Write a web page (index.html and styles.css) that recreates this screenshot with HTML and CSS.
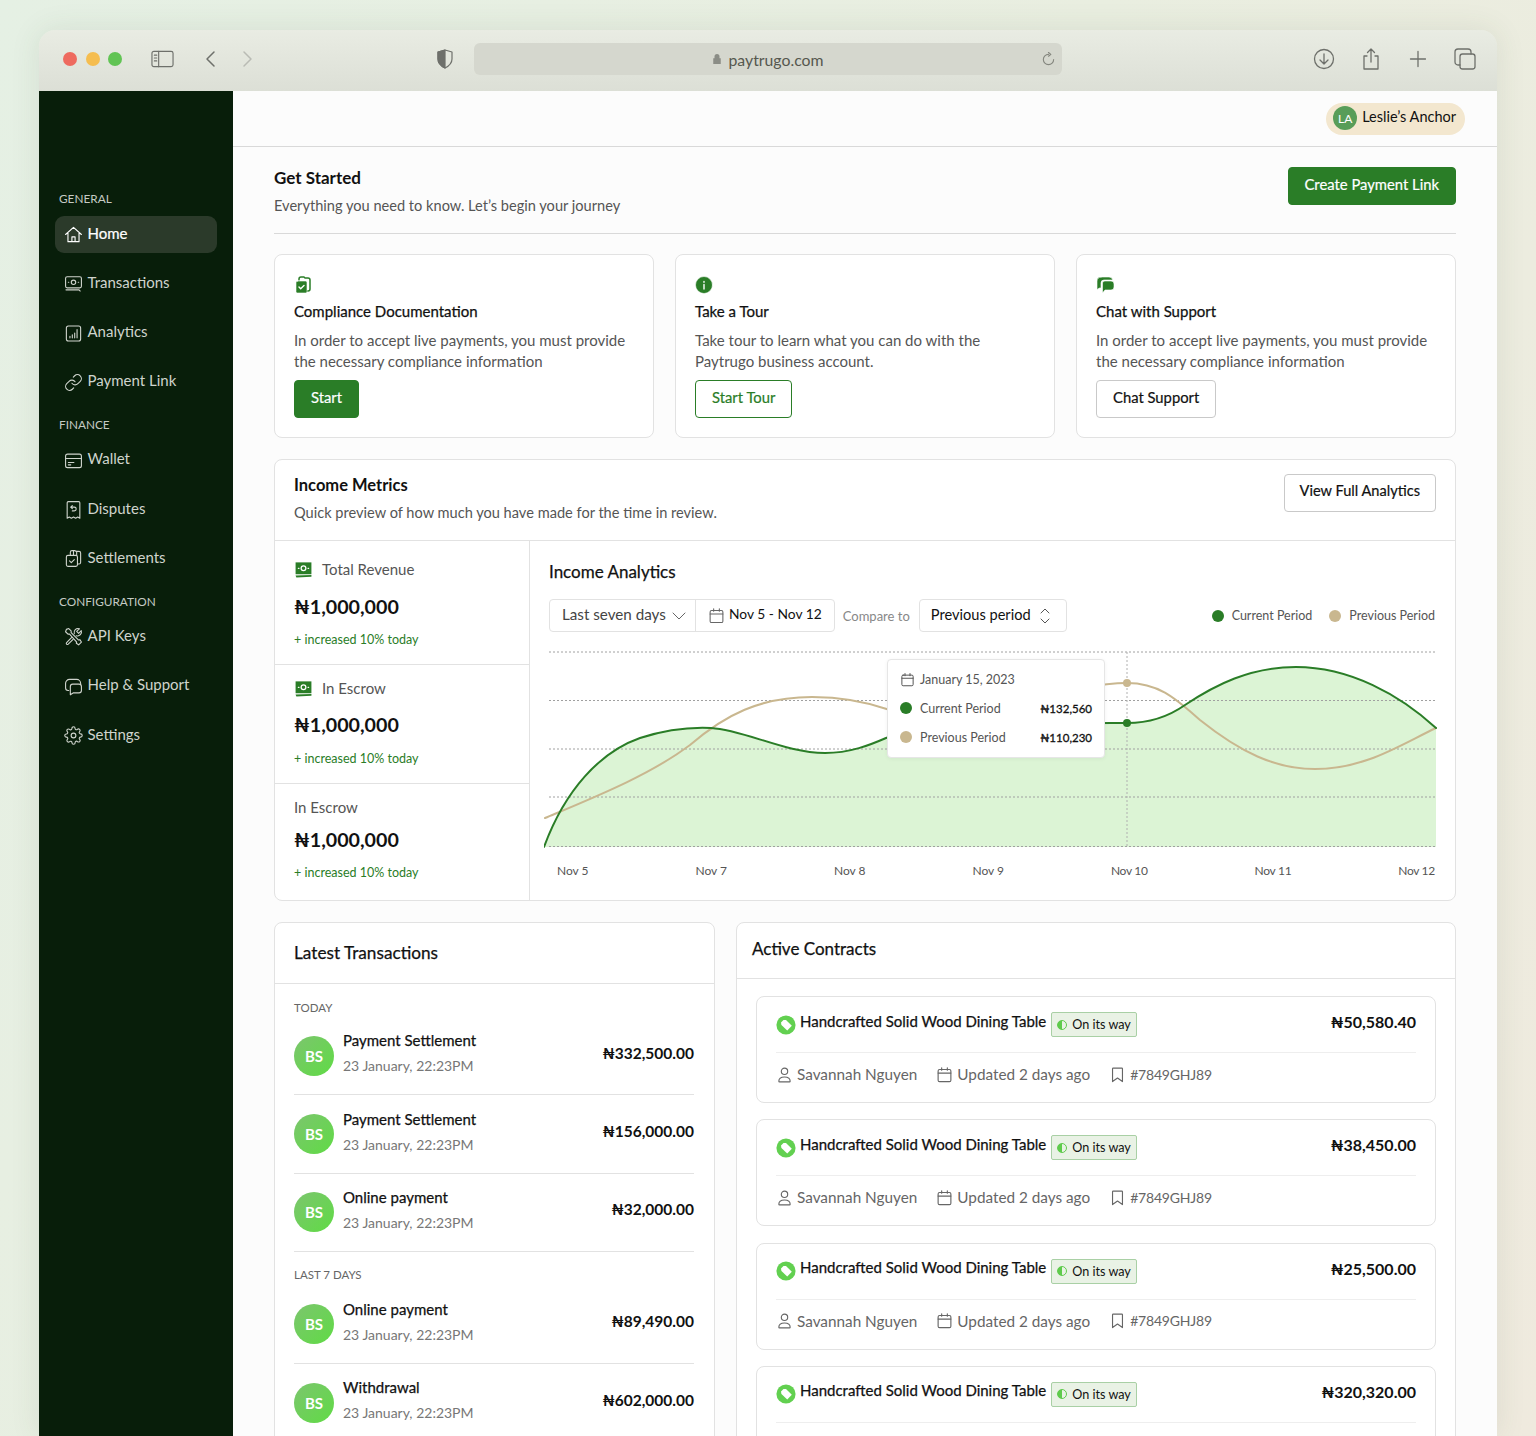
FILE: index.html
```html
<!DOCTYPE html>
<html lang="en">
<head>
    <meta charset="UTF-8">
    <meta name="viewport" content="width=device-width, initial-scale=1.0">
    <title>Paytrugo</title>
    <link rel="stylesheet" href="styles.css">
</head>
<body>
    <svg class="sprite" width="0" height="0">
        <symbol id="i-home" viewBox="0 0 24 24"><path d="M2 12 12 3l10 9M5 10v11h14V10M10 21v-6h4v6"/></symbol>
        <symbol id="i-cash" viewBox="0 0 24 24"><rect x="2" y="3.500" width="20" height="14" rx="2"/><circle cx="12" cy="10.500" r="2.800"/><path d="M5.500 10.500h.5M18 10.500h.5M2.500 20h16.500l1.500 1.500"/></symbol>
        <symbol id="i-chart" viewBox="0 0 24 24"><rect x="3" y="2.500" width="18" height="19" rx="2.500"/><path d="M7.500 17.500v-2M10.500 17.500v-4M13.500 17.500v-6M16.500 17.500V7"/></symbol>
        <symbol id="i-link" viewBox="0 0 24 24"><path d="M10 13a5 5 0 0 0 7.540.54l3-3a5 5 0 0 0-7.070-7.070l-1.720 1.710"/><path d="M14 11a5 5 0 0 0-7.540-.54l-3 3a5 5 0 0 0 7.070 7.070l1.710-1.710"/></symbol>
        <symbol id="i-wallet" viewBox="0 0 24 24"><rect x="2" y="4" width="20" height="17" rx="2.500"/><path d="M2 9.500h20M5.500 14.500h7M5.500 17.500h3"/></symbol>
        <symbol id="i-receipt" viewBox="0 0 24 24"><path d="M4 23V3.500A1.500 1.500 0 0 1 5.500 2h13A1.500 1.500 0 0 1 20 3.500V23l-2.700-1.500L14.700 23 12 21.500 9.300 23l-2.600-1.500z"/><path d="M10.500 7 8.500 9l2 2M8.500 9H13a2.300 2.300 0 0 1 0 4.800h-2.500"/></symbol>
        <symbol id="i-settle" viewBox="0 0 24 24"><path d="M8 7V4a2 2 0 0 1 2-2h4l1 1h4a2 2 0 0 1 2 2v12a2 2 0 0 1-2 2h-2"/><path d="M12 2.500V7M16 3v4"/><rect x="3" y="8" width="14" height="14" rx="2"/><path d="m7 15 2.200 2.200L13 13.500"/></symbol>
        <symbol id="i-tools" viewBox="0 0 24 24"><path d="M3 3l3-1 3 3v2l9.500 9.500 1.500-.5 2 3-3.500 3.500-3-2 .5-1.500L7 9H5L2 6z"/><path d="M13 8.500a5 5 0 0 1 6.500-6.300L16 5.500l2.500 2.500 3.300-3.400A5 5 0 0 1 15.500 11M9.500 13.500 3.300 19.700a1.500 1.500 0 0 0 0 2 1.500 1.500 0 0 0 2 0l6.200-6.200"/></symbol>
        <symbol id="i-chat" viewBox="0 0 24 24"><path d="M6 17H5a3 3 0 0 1-3-3V8a5 5 0 0 1 5-5h9a5 5 0 0 1 5 5v1"/><path d="M8 12a3 3 0 0 1 3-3h8a3 3 0 0 1 3 3v5a3 3 0 0 1-3 3h-7l-4 2.500V12z"/></symbol>
        <symbol id="i-gear" viewBox="0 0 24 24"><circle cx="12" cy="12" r="3"/><path d="M19.400 15a1.650 1.650 0 0 0 .33 1.820l.06.06a2 2 0 0 1 0 2.830 2 2 0 0 1-2.830 0l-.06-.06a1.650 1.650 0 0 0-1.820-.33 1.650 1.650 0 0 0-1 1.510V21a2 2 0 0 1-2 2 2 2 0 0 1-2-2v-.09A1.650 1.650 0 0 0 9 19.400a1.650 1.650 0 0 0-1.820.33l-.06.06a2 2 0 0 1-2.830 0 2 2 0 0 1 0-2.830l.06-.06a1.650 1.650 0 0 0 .33-1.820 1.650 1.650 0 0 0-1.510-1H3a2 2 0 0 1-2-2 2 2 0 0 1 2-2h.09A1.650 1.650 0 0 0 4.600 9a1.650 1.650 0 0 0-.33-1.820l-.06-.06a2 2 0 0 1 0-2.830 2 2 0 0 1 2.830 0l.06.06a1.650 1.650 0 0 0 1.820.33H9a1.650 1.650 0 0 0 1-1.510V3a2 2 0 0 1 2-2 2 2 0 0 1 2 2v.09a1.650 1.650 0 0 0 1 1.510 1.650 1.650 0 0 0 1.820-.33l.06-.06a2 2 0 0 1 2.830 0 2 2 0 0 1 0 2.830l-.06.06a1.650 1.650 0 0 0-.33 1.820V9a1.650 1.650 0 0 0 1.510 1H21a2 2 0 0 1 2 2 2 2 0 0 1-2 2h-.09a1.650 1.650 0 0 0-1.510 1z"/></symbol>
        <symbol id="i-cal" viewBox="0 0 24 24"><rect x="3" y="5" width="18" height="17" rx="2"/><path d="M3 10h18M8 2.500V6M16 2.500V6"/></symbol>
        <symbol id="i-user" viewBox="0 0 24 24"><circle cx="12" cy="7.500" r="4.500"/><path d="M4 21.500c0-4 3-6 8-6s8 2 8 6c0 .5-.5 1-1 1H5c-.5 0-1-.5-1-1z"/></symbol>
        <symbol id="i-mark" viewBox="0 0 24 24"><path d="M6 3h12a1 1 0 0 1 1 1v18l-7-5-7 5V4a1 1 0 0 1 1-1z"/></symbol>
        <symbol id="i-money" viewBox="0 0 24 24"><path d="M2 3h20v15H2z" fill="#2a7d27" stroke="none"/><path d="M2 19.500 22 19v2L3 22z" fill="#2a7d27" stroke="none"/><circle cx="12" cy="10.500" r="3" stroke="#fff" stroke-width="1.600"/><path d="M5.500 10.500h.8M17.700 10.500h.8" stroke="#fff" stroke-width="1.600"/></symbol>
        <symbol id="i-tag" viewBox="0 0 24 24"><circle cx="12" cy="12" r="11.500" fill="#62d050" stroke="none"/><path d="m6 9 3-3h3l7 7-5.500 5.500L6.500 12z" fill="#fff" stroke="none"/></symbol>
    </svg>

    <div class="window">
        <div class="toolbar">
            <div class="lights">
                <span class="light light-red"></span>
                <span class="light light-yellow"></span>
                <span class="light light-green"></span>
            </div>
            <svg class="tb-side" viewBox="0 0 24 18"><rect x="1" y="1" width="22" height="16" rx="2"/><path d="M8 1v16M3.500 5h2.500M3.500 8h2.500M3.500 11h2.500"/></svg>
            <svg class="tb-chev" viewBox="0 0 12 18"><path d="M10 2 3 9l7 7"/></svg>
            <svg class="tb-chev tb-chev-off" viewBox="0 0 12 18"><path d="m2 2 7 7-7 7"/></svg>
            <svg class="tb-shield" viewBox="0 0 18 20"><path d="M9 1 2 3v7c0 4 3 7 7 9 4-2 7-5 7-9V3z"/><path d="M9 1 2 3v7c0 4 3 7 7 9z" class="tb-shield-half"/></svg>
            <div class="urlbar">
                <span class="url-text">
                    <svg class="url-lock" viewBox="0 0 12 14"><path d="M3 6V4a3 3 0 0 1 6 0v2h1.500v7h-9V6z"/></svg>
                    paytrugo.com
                </span>
                <svg class="url-reload" viewBox="0 0 16 16"><path d="M8 2.500a5.500 5.500 0 1 0 5.500 5.500M8 .5l2.500 2L8 4.500"/></svg>
            </div>
            <div class="tb-right">
                <svg class="tb-icon" viewBox="0 0 22 22"><circle cx="11" cy="11" r="9.500"/><path d="M11 6v10M7 12l4 4 4-4"/></svg>
                <svg class="tb-icon" viewBox="0 0 22 22"><path d="M7 8H4v13h14V8h-3M11 14V1M7.500 4.500 11 1l3.500 3.500"/></svg>
                <svg class="tb-icon" viewBox="0 0 22 22"><path d="M11 3.500v15M3.500 11h15"/></svg>
                <svg class="tb-icon" viewBox="0 0 22 22"><rect x="6" y="6" width="15" height="15" rx="2.500"/><path d="M6 17H4a3 3 0 0 1-3-3V4a3 3 0 0 1 3-3h10a3 3 0 0 1 3 3v2"/></svg>
            </div>
        </div>

        <div class="app">
            <aside class="sidebar">
                <div class="nav-label">GENERAL</div>
                <nav class="nav-group">
                    <a class="nav-item active"><svg class="nav-icon"><use href="#i-home"/></svg><span>Home</span></a>
                    <a class="nav-item"><svg class="nav-icon"><use href="#i-cash"/></svg><span>Transactions</span></a>
                    <a class="nav-item"><svg class="nav-icon"><use href="#i-chart"/></svg><span>Analytics</span></a>
                    <a class="nav-item"><svg class="nav-icon"><use href="#i-link"/></svg><span>Payment Link</span></a>
                </nav>
                <div class="nav-label">FINANCE</div>
                <nav class="nav-group">
                    <a class="nav-item"><svg class="nav-icon"><use href="#i-wallet"/></svg><span>Wallet</span></a>
                    <a class="nav-item"><svg class="nav-icon"><use href="#i-receipt"/></svg><span>Disputes</span></a>
                    <a class="nav-item"><svg class="nav-icon"><use href="#i-settle"/></svg><span>Settlements</span></a>
                </nav>
                <div class="nav-label">CONFIGURATION</div>
                <nav class="nav-group">
                    <a class="nav-item"><svg class="nav-icon"><use href="#i-tools"/></svg><span>API Keys</span></a>
                    <a class="nav-item"><svg class="nav-icon"><use href="#i-chat"/></svg><span>Help &amp; Support</span></a>
                    <a class="nav-item"><svg class="nav-icon"><use href="#i-gear"/></svg><span>Settings</span></a>
                </nav>
            </aside>

            <main class="main">
                <header class="topbar">
                    <div class="account"><span class="account-avatar">LA</span><span class="account-name">Leslie’s Anchor</span></div>
                </header>

                <div class="content">
                    <section class="intro">
                        <div>
                            <h1>Get Started</h1>
                            <p>Everything you need to know. Let’s begin your journey</p>
                        </div>
                        <button class="btn btn-green btn-create">Create Payment Link</button>
                    </section>

                    <section class="start-cards">
                        <div class="card start-card">
                            <svg class="start-icon" viewBox="0 0 18 18"><path d="M5 4V3a2 2 0 0 1 2-2h3l1 1h3a2 2 0 0 1 2 2v9a2 2 0 0 1-2 2h-1" class="solid-line"/><rect x="2" y="5" width="11" height="12" rx="1.500" class="solid"/><path d="m5 11 1.700 1.700L10 9.500" class="check"/></svg>
                            <h3>Compliance Documentation</h3>
                            <p>In order to accept live payments, you must provide the necessary compliance information</p>
                            <button class="btn btn-green">Start</button>
                        </div>
                        <div class="card start-card">
                            <svg class="start-icon" viewBox="0 0 18 18"><circle cx="9" cy="9" r="8.500" class="solid"/><path d="M9 8.500V13M9 5.500v.8" class="check"/></svg>
                            <h3>Take a Tour</h3>
                            <p>Take tour to learn what you can do with the Paytrugo business account.</p>
                            <button class="btn btn-outline-green">Start Tour</button>
                        </div>
                        <div class="card start-card">
                            <svg class="start-icon" viewBox="0 0 18 18"><path d="M5 1h8a4 4 0 0 1 3.800 3H8a3 3 0 0 0-3 3v5H3.500L1 13.500V5a4 4 0 0 1 4-4z" class="solid"/><path d="M8 5h7a3 3 0 0 1 3 3v3a3 3 0 0 1-3 3H9l-2.500 3V7A2 2 0 0 1 8 5z" class="solid"/></svg>
                            <h3>Chat with Support</h3>
                            <p>In order to accept live payments, you must provide the necessary compliance information</p>
                            <button class="btn btn-outline">Chat Support</button>
                        </div>
                    </section>

                    <section class="card metrics">
                        <div class="metrics-head">
                            <div>
                                <h2>Income Metrics</h2>
                                <p>Quick preview of how much you have made for the time in review.</p>
                            </div>
                            <button class="btn btn-outline">View Full Analytics</button>
                        </div>
                        <div class="metrics-body">
                            <div class="stats">
                                <div class="stat stat-first">
                                    <div class="stat-label"><svg class="stat-icon"><use href="#i-money"/></svg>Total Revenue</div>
                                    <div class="stat-value">₦1,000,000</div>
                                    <div class="stat-note">+ increased 10% today</div>
                                </div>
                                <div class="stat">
                                    <div class="stat-label"><svg class="stat-icon"><use href="#i-money"/></svg>In Escrow</div>
                                    <div class="stat-value">₦1,000,000</div>
                                    <div class="stat-note">+ increased 10% today</div>
                                </div>
                                <div class="stat stat-last">
                                    <div class="stat-label">In Escrow</div>
                                    <div class="stat-value">₦1,000,000</div>
                                    <div class="stat-note">+ increased 10% today</div>
                                </div>
                            </div>
                            <div class="analytics">
                                <h2>Income Analytics</h2>
                                <div class="filters">
                                    <div class="range">
                                        <div class="range-part range-days"><span>Last seven days</span>
                                            <svg class="chev" viewBox="0 0 14 8"><path d="m1 1 6 6 6-6"/></svg>
                                        </div>
                                        <div class="range-part range-dates"><svg class="cal-icon"><use href="#i-cal"/></svg><span>Nov 5 - Nov 12</span></div>
                                    </div>
                                    <span class="compare">Compare to</span>
                                    <div class="period"><span>Previous period</span>
                                        <svg class="updown" viewBox="0 0 10 16"><path d="m1 5 4-4 4 4M1 11l4 4 4-4"/></svg>
                                    </div>
                                    <div class="legend">
                                        <span class="legend-item"><i class="dot dot-green"></i>Current Period</span>
                                        <span class="legend-item"><i class="dot dot-tan"></i>Previous Period</span>
                                    </div>
                                </div>
                                <div class="chart">
                                    <svg class="chart-svg" viewBox="544 650 894 200" width="894" height="200">
                                        <path class="chart-area" d="M544 847C565 790 600 752 640 738C665 730 690 727 711 728C745 730 785 753 825 753C850 753 870 745 886 738C930 722 1080 723 1127 723C1150 723 1168 717 1185 705C1215 685 1250 667 1296 667C1350 667 1400 695 1436 728V847z"/>
                                        <path class="grid" d="M549 652H1437M549 700.500H1437M549 749H1437M549 797H1437M549 846.500H1437"/>
                                        <path class="cursor" d="M1127 652V846"/>
                                        <path class="line-tan" d="M545 818C595 797 650 775 690 745C725 715 760 697 812 697C845 697 870 703 890 710C950 730 1060 683 1127 683C1160 683 1177 700 1200 720C1240 752 1275 769 1315 769C1365 769 1400 745 1436 728"/>
                                        <path class="line-green" d="M544 847C565 790 600 752 640 738C665 730 690 727 711 728C745 730 785 753 825 753C850 753 870 745 886 738C930 722 1080 723 1127 723C1150 723 1168 717 1185 705C1215 685 1250 667 1296 667C1350 667 1400 695 1436 728"/>
                                        <circle class="pin-tan" cx="1127" cy="683" r="4"/>
                                        <circle class="pin-green" cx="1127" cy="723" r="4"/>
                                    </svg>
                                    <div class="tip">
                                        <div class="tip-date"><svg class="tip-cal"><use href="#i-cal"/></svg>January 15, 2023</div>
                                        <div class="tip-row"><i class="dot dot-green"></i><span class="tip-name">Current Period</span><b>₦132,560</b></div>
                                        <div class="tip-row"><i class="dot dot-tan"></i><span class="tip-name">Previous Period</span><b>₦110,230</b></div>
                                    </div>
                                </div>
                                <div class="x-axis">
                                    <span>Nov 5</span><span>Nov 7</span><span>Nov 8</span><span>Nov 9</span><span>Nov 10</span><span>Nov 11</span><span>Nov 12</span>
                                </div>
                            </div>
                        </div>
                    </section>

                    <section class="bottom">
                        <div class="card latest">
                            <h2 class="latest-title">Latest Transactions</h2>
                            <div class="latest-body">
                                <div class="group-label">TODAY</div>
                                <div class="tx">
                                    <span class="tx-avatar">BS</span>
                                    <div class="tx-text"><strong>Payment Settlement</strong><span>23 January, 22:23PM</span></div>
                                    <div class="tx-amount">₦332,500.00</div>
                                </div>
                                <div class="tx">
                                    <span class="tx-avatar">BS</span>
                                    <div class="tx-text"><strong>Payment Settlement</strong><span>23 January, 22:23PM</span></div>
                                    <div class="tx-amount">₦156,000.00</div>
                                </div>
                                <div class="tx">
                                    <span class="tx-avatar">BS</span>
                                    <div class="tx-text"><strong>Online payment</strong><span>23 January, 22:23PM</span></div>
                                    <div class="tx-amount">₦32,000.00</div>
                                </div>
                                <div class="group-label group-label-next">LAST 7 DAYS</div>
                                <div class="tx">
                                    <span class="tx-avatar">BS</span>
                                    <div class="tx-text"><strong>Online payment</strong><span>23 January, 22:23PM</span></div>
                                    <div class="tx-amount">₦89,490.00</div>
                                </div>
                                <div class="tx">
                                    <span class="tx-avatar">BS</span>
                                    <div class="tx-text"><strong>Withdrawal</strong><span>23 January, 22:23PM</span></div>
                                    <div class="tx-amount">₦602,000.00</div>
                                </div>
                            </div>
                        </div>

                        <div class="card contracts">
                            <h2 class="contracts-title">Active Contracts</h2>
                            <div class="contracts-body">
                                <div class="contract">
                                    <div class="contract-top">
                                        <svg class="tag-icon"><use href="#i-tag"/></svg>
                                        <strong>Handcrafted Solid Wood Dining Table</strong>
                                        <span class="badge"><i class="badge-dot"></i>On its way</span>
                                        <b class="contract-amount">₦50,580.40</b>
                                    </div>
                                    <div class="contract-meta">
                                        <span><svg class="meta-icon"><use href="#i-user"/></svg>Savannah Nguyen</span>
                                        <span><svg class="meta-icon"><use href="#i-cal"/></svg>Updated 2 days ago</span>
                                        <span class="meta-ref"><svg class="meta-icon"><use href="#i-mark"/></svg>#7849GHJ89</span>
                                    </div>
                                </div>
                                <div class="contract">
                                    <div class="contract-top">
                                        <svg class="tag-icon"><use href="#i-tag"/></svg>
                                        <strong>Handcrafted Solid Wood Dining Table</strong>
                                        <span class="badge"><i class="badge-dot"></i>On its way</span>
                                        <b class="contract-amount">₦38,450.00</b>
                                    </div>
                                    <div class="contract-meta">
                                        <span><svg class="meta-icon"><use href="#i-user"/></svg>Savannah Nguyen</span>
                                        <span><svg class="meta-icon"><use href="#i-cal"/></svg>Updated 2 days ago</span>
                                        <span class="meta-ref"><svg class="meta-icon"><use href="#i-mark"/></svg>#7849GHJ89</span>
                                    </div>
                                </div>
                                <div class="contract">
                                    <div class="contract-top">
                                        <svg class="tag-icon"><use href="#i-tag"/></svg>
                                        <strong>Handcrafted Solid Wood Dining Table</strong>
                                        <span class="badge"><i class="badge-dot"></i>On its way</span>
                                        <b class="contract-amount">₦25,500.00</b>
                                    </div>
                                    <div class="contract-meta">
                                        <span><svg class="meta-icon"><use href="#i-user"/></svg>Savannah Nguyen</span>
                                        <span><svg class="meta-icon"><use href="#i-cal"/></svg>Updated 2 days ago</span>
                                        <span class="meta-ref"><svg class="meta-icon"><use href="#i-mark"/></svg>#7849GHJ89</span>
                                    </div>
                                </div>
                                <div class="contract">
                                    <div class="contract-top">
                                        <svg class="tag-icon"><use href="#i-tag"/></svg>
                                        <strong>Handcrafted Solid Wood Dining Table</strong>
                                        <span class="badge"><i class="badge-dot"></i>On its way</span>
                                        <b class="contract-amount">₦320,320.00</b>
                                    </div>
                                </div>
                            </div>
                        </div>
                    </section>
                </div>
            </main>
        </div>
    </div>
</body>
</html>
```

FILE: styles.css
```css
/* Page + browser frame */
* {
    box-sizing: border-box;
}

html, body {
    height: 1436px;
    overflow: hidden;
}

body {
    margin: 0;
    padding: 30px 39px 0;
    font-family: Lato, "Noto Sans", sans-serif;
    font-size: 15px;
    color: #111;
    background: linear-gradient(115deg, #e5f0e4 0%, #e9eee0 50%, #efeade 100%);
}

.sprite {
    position: absolute;
}

h1, h2, h3, p {
    margin: 0;
}

svg {
    fill: none;
    stroke: currentColor;
    stroke-linecap: round;
    stroke-linejoin: round;
}

.window {
    width: 1458px;
    height: 1406px;
    border-radius: 16px 16px 0 0;
    overflow: hidden;
    box-shadow: 0 0 30px rgba(60, 80, 50, 0.1);
}

.toolbar {
    display: flex;
    align-items: center;
    height: 61px;
    padding: 0 21px 3px 24px;
    color: #6e706b;
    background: linear-gradient(180deg, #e9ece3, #dcdfd6);
}

.lights {
    display: flex;
    gap: 8.5px;
}

.light {
    width: 14px;
    height: 14px;
    border-radius: 50%;
}

.light-red { background-color: #ee6a5f; }
.light-yellow { background-color: #f5bd4f; }
.light-green { background-color: #61c454; }

.tb-side {
    width: 23px;
    height: 18px;
    margin-left: 29px;
    stroke-width: 1.2;
}

.tb-chev {
    width: 12px;
    height: 18px;
    margin-left: 30px;
    stroke-width: 1.5;
}

.tb-chev-off {
    margin-left: 26px;
    color: #b9bbb4;
}

.tb-shield {
    width: 18px;
    height: 20px;
    margin-left: 182px;
    stroke-width: 1.2;
}

.tb-shield-half {
    fill: currentColor;
}

.urlbar {
    position: relative;
    display: flex;
    align-items: center;
    justify-content: center;
    width: 588px;
    height: 32px;
    margin-left: 20px;
    border-radius: 6px;
    font-size: 15.800px;
    color: #55574f;
    background-color: #d5d7ce;
}

.url-text {
    display: flex;
    align-items: center;
    gap: 6px;
}

.url-lock {
    width: 10px;
    height: 12px;
    fill: #8b8d86;
    stroke: none;
}

.url-reload {
    position: absolute;
    right: 6px;
    top: 9px;
    width: 15px;
    height: 15px;
    color: #85877f;
    stroke-width: 1.2;
}

.tb-right {
    display: flex;
    gap: 25px;
    margin-left: auto;
}

.tb-icon {
    width: 22px;
    height: 22px;
    stroke-width: 1.3;
}

.app {
    display: flex;
    height: 1345px;
}

/* Sidebar */
.sidebar {
    flex: 0 0 194px;
    padding: 101px 16px 0;
    color: #cfd4cd;
    background-color: #081e0a;
}

.nav-label {
    height: 14px;
    margin: 0 0 9.500px 4px;
    font-size: 11.800px;
    line-height: 14px;
    color: #c5cbc4;
}

.nav-group {
    display: flex;
    flex-direction: column;
    gap: 12.3px;
    margin-bottom: 17.500px;
}

.nav-group:first-of-type {
    margin-top: 10px;
}

.nav-item {
    display: flex;
    align-items: center;
    gap: 4.5px;
    width: 162px;
    height: 37px;
    padding-left: 9px;
    border-radius: 9px;
    font-size: 15px;
}

.nav-item span {
    margin-bottom: 4px;
}

.nav-item.active {
    color: #fff;
    background-color: #2b3a2a;
    -webkit-text-stroke: 0.2px currentColor;
}

.nav-icon {
    width: 19px;
    height: 19px;
    stroke-width: 1.4;
}

/* Main column */
.main {
    flex: 1;
    min-width: 0;
    background-color: #fcfcfc;
}

.topbar {
    display: flex;
    align-items: center;
    justify-content: flex-end;
    height: 56px;
    padding-right: 32px;
    border-bottom: 1px solid #d9d9d9;
}

.account {
    display: flex;
    align-items: center;
    gap: 5px;
    height: 32px;
    padding: 0 9px 0 7px;
    border-radius: 16px;
    font-size: 14.500px;
    background-color: #f3e7cf;
}

.account-name {
    margin-bottom: 4px;
}

.account-avatar {
    display: flex;
    align-items: center;
    justify-content: center;
    width: 24px;
    height: 24px;
    margin-bottom: 1px;
    border-radius: 50%;
    font-size: 12px;
    color: #fff;
    background-color: #589d58;
}

.content {
    padding: 20px 41px 0;
}

.intro {
    display: flex;
    justify-content: space-between;
    height: 67px;
    border-bottom: 1px solid #d9d9d9;
}

.intro h1 {
    margin-top: 1px;
    font-size: 17px;
    font-weight: 700;
    line-height: 20px;
}

.intro p {
    margin-top: 8px;
    font-size: 14.600px;
    line-height: 20px;
    color: #555;
}

.btn {
    height: 38px;
    padding: 0 16px 5px;
    border-radius: 4px;
    font-family: inherit;
    font-size: 14.800px;
    background-color: #fff;
    cursor: pointer;
    -webkit-text-stroke: 0.2px currentColor;
}

.btn-green {
    border: 1px solid #2a7d27;
    color: #fff;
    background-color: #2a7d27;
}

.btn-outline-green {
    border: 1px solid #2a7d27;
    color: #2a7d27;
}

.btn-outline {
    border: 1px solid #c9c9c9;
    color: #111;
}

.card {
    border: 1px solid #e2e2e2;
    border-radius: 8px;
    background-color: #fff;
}

.start-cards {
    display: grid;
    grid-template-columns: repeat(3, 1fr);
    gap: 21px;
    margin-top: 20px;
}

.start-card {
    height: 184px;
    padding: 21px 19px 0;
}

.start-icon {
    display: block;
    width: 18px;
    height: 18px;
}

.solid {
    fill: #2a7d27;
    stroke: #fff;
    stroke-width: 0.6;
}

.solid-line {
    stroke: #2a7d27;
    stroke-width: 1.5;
}

.check {
    stroke: #fff;
    stroke-width: 1.4;
}

.start-card h3 {
    margin-top: 7px;
    font-size: 15px;
    font-weight: 400;
    line-height: 20px;
    -webkit-text-stroke: 0.25px currentColor;
}

.start-card p {
    margin-top: 9px;
    font-size: 15px;
    line-height: 21px;
    color: #555;
}

.start-card .btn {
    margin-top: 8px;
}

/* Income metrics */
.metrics {
    margin-top: 21px;
}

.metrics-head {
    display: flex;
    align-items: flex-start;
    justify-content: space-between;
    height: 81px;
    padding: 14px 19px 0;
    border-bottom: 1px solid #e2e2e2;
}

.metrics-head h2 {
    margin-top: 1px;
    font-size: 16.500px;
    font-weight: 700;
    line-height: 20px;
}

.metrics-head p {
    margin-top: 8px;
    font-size: 14.600px;
    line-height: 20px;
    color: #555;
}

.metrics-head .btn {
    padding: 0 15px 5px;
    font-size: 14.600px;
}

.metrics-body {
    display: flex;
}

.stats {
    flex: 0 0 255px;
    border-right: 1px solid #e2e2e2;
}

.stat {
    height: 119px;
    padding: 13px 19px 0;
    border-bottom: 1px solid #e2e2e2;
}

.stat-first {
    height: 124px;
    padding-top: 18px;
}

.stat-last {
    height: 116px;
    border-bottom: none;
}

.stat-label {
    display: flex;
    align-items: center;
    gap: 9px;
    height: 20px;
    font-size: 15px;
    color: #555;
}

.stat-icon {
    width: 19px;
    height: 19px;
}

.stat-value {
    margin-top: 14px;
    font-size: 19.700px;
    font-weight: 700;
    line-height: 26px;
}

.stat-first .stat-value {
    margin-top: 15px;
}

.stat-last .stat-value {
    margin-top: 10px;
}

.stat-note {
    margin-top: 13px;
    font-size: 12.500px;
    line-height: 16px;
    color: #2a7d27;
}

.stat-first .stat-note, .stat-last .stat-note {
    margin-top: 12px;
}

.analytics {
    flex: 1;
    min-width: 0;
    padding: 21px 20px 0 19px;
}

.analytics h2 {
    font-size: 17px;
    font-weight: 400;
    line-height: 20px;
    -webkit-text-stroke: 0.25px currentColor;
}

.filters {
    display: flex;
    align-items: center;
    margin-top: 17px;
    font-size: 14px;
}

.range {
    display: flex;
    height: 33px;
    border: 1px solid #e2e2e2;
    border-radius: 4px;
}

.range-part {
    display: flex;
    align-items: center;
}

.range-part span {
    margin-bottom: 4px;
}

.period span {
    margin-bottom: 2px;
}

.range-days {
    gap: 6px;
    width: 146px;
    padding-left: 12px;
    border-right: 1px solid #e2e2e2;
    font-size: 15.200px;
    color: #444;
}

.chev {
    width: 14px;
    height: 8px;
    color: #666;
}

.range-dates {
    gap: 4px;
    padding: 0 12px;
    font-size: 13.800px;
}

.cal-icon {
    width: 17px;
    height: 17px;
    color: #666;
    stroke-width: 1.5;
}

.compare {
    margin: 0 9px 0 8px;
    font-size: 13px;
    color: #888;
}

.period {
    display: flex;
    align-items: center;
    justify-content: space-between;
    width: 148px;
    height: 33px;
    padding: 0 16px 0 11px;
    border: 1px solid #e2e2e2;
    border-radius: 4px;
    font-size: 14.600px;
}

.updown {
    width: 10px;
    height: 16px;
    color: #555;
}

.legend {
    display: flex;
    gap: 17px;
    margin-left: auto;
    font-size: 12.500px;
    color: #555;
}

.legend-item {
    display: flex;
    align-items: center;
    gap: 8px;
}

.dot {
    display: block;
    flex: none;
    width: 12px;
    height: 12px;
    border-radius: 50%;
}

.dot-green { background-color: #2a7d27; }
.dot-tan { background-color: #c9b78f; }

.chart {
    position: relative;
    height: 200px;
    margin: 18px -4px 0 -5px;
}

.chart-svg {
    display: block;
}

.chart-area {
    fill: #dcf4d5;
    stroke: none;
}

.grid {
    stroke: #a0a0a0;
    stroke-width: 1;
    stroke-dasharray: 2 2;
    stroke-linecap: butt;
}

.cursor {
    stroke: #b0b0b0;
    stroke-width: 1;
    stroke-dasharray: 2 2;
    stroke-linecap: butt;
}

.line-green {
    stroke: #2a7d27;
    stroke-width: 2;
}

.line-tan {
    stroke: #c9b78f;
    stroke-width: 2;
}

.pin-tan {
    fill: #c9b78f;
    stroke: none;
}

.pin-green {
    fill: #2a7d27;
    stroke: none;
}

/* floating tooltip over the chart */
.tip {
    position: absolute;
    left: 343px;
    top: 9px;
    width: 218px;
    height: 99px;
    padding: 9px 12px;
    border: 1px solid #e6e6e6;
    border-radius: 4px;
    font-size: 12.500px;
    color: #555;
    background-color: #fff;
    box-shadow: 0 1px 4px rgba(0, 0, 0, 0.05);
}

.tip-date, .tip-row {
    display: flex;
    align-items: center;
    height: 20px;
}

.tip-date {
    gap: 5px;
}

.tip-cal {
    width: 15px;
    height: 15px;
    stroke-width: 1.6;
}

.tip-row {
    gap: 8px;
    margin-top: 9px;
}

.tip-name {
    flex: 1;
}

.tip-row b {
    font-size: 11.500px;
    font-weight: 400;
    color: #111;
    -webkit-text-stroke: 0.3px currentColor;
}

.x-axis {
    display: flex;
    justify-content: space-between;
    margin-top: 13px;
    padding-left: 8px;
    font-size: 12px;
    color: #555;
}

.x-axis span:nth-child(n+5) {
    letter-spacing: -0.3px;
}

/* Bottom two cards */
.bottom {
    display: grid;
    grid-template-columns: 441px 1fr;
    gap: 21px;
    margin-top: 21px;
}

.latest-title {
    height: 61px;
    padding-left: 19px;
    border-bottom: 1px solid #e2e2e2;
    font-size: 17.200px;
    font-weight: 400;
    line-height: 60px;
    -webkit-text-stroke: 0.25px currentColor;
}

.latest-body {
    padding: 17px 20px 0 19px;
}

.group-label {
    height: 16px;
    font-size: 11.500px;
    line-height: 14px;
    color: #666;
}

.group-label-next {
    margin-top: 16px;
    margin-bottom: 1.500px;
}

.tx {
    display: flex;
    align-items: center;
    height: 78.400px;
    border-bottom: 1px solid #e2e2e2;
}

.tx-avatar {
    display: flex;
    flex: none;
    align-items: center;
    justify-content: center;
    width: 40px;
    height: 40px;
    margin-right: 9px;
    border-radius: 50%;
    font-size: 15px;
    font-weight: 700;
    color: #fff;
    background: linear-gradient(135deg, #7cc56e, #60db45);
}

.tx-text {
    display: flex;
    flex-direction: column;
    gap: 6px;
    margin-top: -5px;
}

.tx-text strong {
    font-size: 15px;
    font-weight: 400;
    line-height: 19px;
    -webkit-text-stroke: 0.25px currentColor;
}

.tx-text span {
    font-size: 14px;
    line-height: 19px;
    color: #777;
}

.tx-amount {
    margin: -6px 0 0 auto;
    font-size: 15.500px;
    font-weight: 700;
}

.contracts-title {
    height: 56px;
    padding-left: 15px;
    border-bottom: 1px solid #e2e2e2;
    font-size: 17px;
    font-weight: 400;
    line-height: 52px;
    -webkit-text-stroke: 0.25px currentColor;
}

.contracts-body {
    display: flex;
    flex-direction: column;
    gap: 16.300px;
    padding: 17px 19px 0;
}

.contract {
    height: 107px;
    padding: 0 19px;
    border: 1px solid #e2e2e2;
    border-radius: 8px;
}

.contract-top {
    display: flex;
    align-items: center;
    gap: 5px;
    height: 56px;
    border-bottom: 1px solid #eee;
}

.tag-icon {
    width: 20px;
    height: 20px;
}

.contract-top strong {
    margin-bottom: 8px;
    margin-left: -1px;
    font-size: 15px;
    font-weight: 400;
    -webkit-text-stroke: 0.25px currentColor;
}

.badge {
    display: flex;
    align-items: center;
    gap: 5px;
    height: 25px;
    padding: 0 5px;
    border: 1px solid #a9d0a5;
    border-radius: 2px;
    font-size: 12.600px;
    background-color: #e9f2e5;
}

.badge-dot {
    width: 10px;
    height: 10px;
    border-radius: 50%;
    background: conic-gradient(#e9f2e5 0 50%, #5fcb4c 50% 100%);
    border: 1px solid #5fcb4c;
}

.contract-amount {
    margin: 0 0 6px auto;
    font-size: 16px;
    font-weight: 700;
}

.contract-meta {
    display: flex;
    gap: 19px;
    padding-top: 12px;
    font-size: 15.300px;
    color: #666;
}

.contract-meta span {
    display: flex;
    align-items: center;
    gap: 4px;
}

.meta-ref {
    font-size: 14px;
    letter-spacing: -0.2px;
}

.meta-icon {
    width: 17px;
    height: 17px;
    stroke-width: 1.6;
}
```
